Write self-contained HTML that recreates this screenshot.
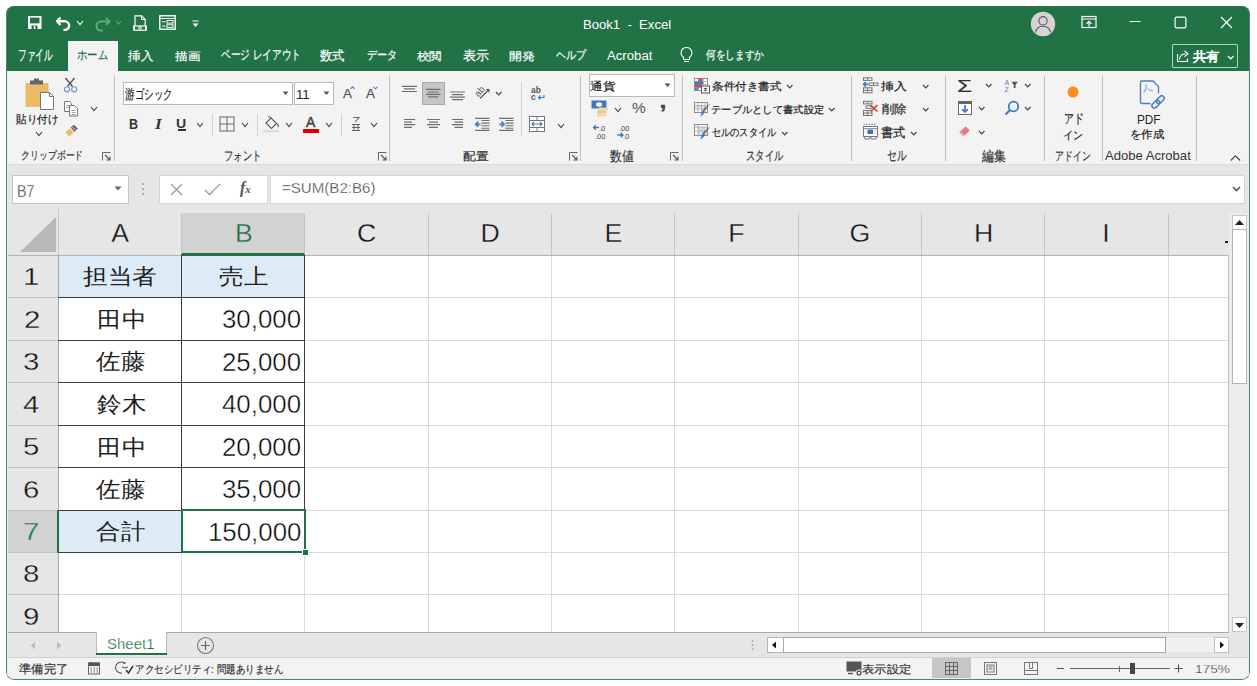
<!DOCTYPE html>
<html><head><meta charset="utf-8"><title>Book1 - Excel</title>
<style>
html,body{margin:0;padding:0;background:#fff;width:1257px;height:686px;overflow:hidden}
body{font-family:"Liberation Sans",sans-serif;position:relative}
#app{position:absolute;left:0;top:0;width:1257px;height:686px;clip-path:inset(6px 7px 6px 6px round 8px);overflow:hidden}
.t{position:absolute;line-height:1.2;white-space:nowrap}
.u{-webkit-text-stroke:0.2px currentColor}
svg{overflow:visible}
</style></head><body><div id="app">
<div style="position:absolute;left:0px;top:0px;width:1257px;height:71px;background:#217346"></div>
<svg style="position:absolute;left:27px;top:15px;" width="16" height="16" viewBox="0 0 16 16"><rect x="1" y="1" width="13.5" height="13" fill="#fff"/><rect x="3" y="2.6" width="9.5" height="5.8" fill="#217346"/><rect x="4.5" y="10.5" width="6" height="3.5" fill="#217346"/><rect x="6.8" y="11" width="1.6" height="3" fill="#fff"/></svg>
<svg style="position:absolute;left:55px;top:15px;" width="18" height="16" viewBox="0 0 18 16"><path d="M5.5 2.5 L2 6.3 L5.5 10" fill="none" stroke="#fff" stroke-width="2.4" stroke-linejoin="round"/><path d="M2.8 6.3 H9.8 a4.3 4.3 0 0 1 0 8.6 H8.5" fill="none" stroke="#fff" stroke-width="2.4"/></svg>
<svg style="position:absolute;left:76px;top:20px;" width="8" height="5.5" viewBox="0 0 8 5.5"><path d="M1 1 L4.0 4.5 L7 1" fill="none" stroke="#fff" stroke-width="1.15"/></svg>
<svg style="position:absolute;left:93px;top:15px;" width="18" height="16" viewBox="0 0 18 16"><path d="M13 3 L16.2 6.5 L13 10" fill="none" stroke="#5ea97d" stroke-width="2.2"/><path d="M15.5 6.5 H8 a4.5 4.5 0 0 0 0 9 H10" fill="none" stroke="#5ea97d" stroke-width="2.2"/></svg>
<svg style="position:absolute;left:115px;top:20px;" width="7" height="5" viewBox="0 0 7 5"><path d="M1 1 L3.5 4 L6 1" fill="none" stroke="#5ea97d" stroke-width="1.15"/></svg>
<svg style="position:absolute;left:133px;top:15px;" width="14" height="16" viewBox="0 0 14 16"><path d="M2 11 V0.8 H8.5 L12.2 4.5 V11" fill="none" stroke="#fff" stroke-width="1.2"/><path d="M8.5 0.8 V4.5 H12.2" fill="none" stroke="#fff" stroke-width="1"/><rect x="0.8" y="11" width="12.4" height="4.2" fill="none" stroke="#fff" stroke-width="1.2"/><circle cx="7" cy="13.1" r="1.3" fill="none" stroke="#fff" stroke-width="1"/><rect x="0.5" y="11.5" width="1.5" height="3" fill="#fff"/><rect x="12" y="11.5" width="1.5" height="3" fill="#fff"/></svg>
<svg style="position:absolute;left:159px;top:15px;" width="17" height="15" viewBox="0 0 17 15"><rect x="0.8" y="0.8" width="15.4" height="13.4" fill="none" stroke="#fff" stroke-width="1.4"/><line x1="1" y1="3.5" x2="16" y2="3.5" stroke="#fff" stroke-width="1.2"/><rect x="8" y="5.5" width="6" height="2.6" fill="none" stroke="#fff" stroke-width="1"/><rect x="8" y="9.8" width="6" height="2.6" fill="none" stroke="#fff" stroke-width="1"/><line x1="3" y1="6.8" x2="6.5" y2="6.8" stroke="#fff"/><line x1="3" y1="11" x2="6.5" y2="11" stroke="#fff"/></svg>
<svg style="position:absolute;left:192px;top:20px;" width="8" height="8" viewBox="0 0 8 8"><line x1="0.5" y1="1" x2="6.5" y2="1" stroke="#fff" stroke-width="1.2"/><path d="M0.5 3.5 H6.5 L3.5 7 Z" fill="#fff"/></svg>
<div class="t" style="left:583.32px;top:17.15px;font-size:13.438px;color:#fff;;transform:scaleX(0.9764);transform-origin:0 0">Book1&nbsp;&nbsp;-&nbsp;&nbsp;Excel</div>
<svg style="position:absolute;left:1030px;top:11px;" width="26" height="26" viewBox="0 0 26 26"><circle cx="13" cy="13" r="12.2" fill="#d5d3d4"/><circle cx="13" cy="9.8" r="4.2" fill="none" stroke="#5c5c5c" stroke-width="1.1"/><path d="M5.5 21.5 Q6.5 15.2 13 15.2 Q19.5 15.2 20.5 21.5" fill="none" stroke="#5c5c5c" stroke-width="1.1"/></svg>
<svg style="position:absolute;left:1081px;top:15px;" width="16" height="14" viewBox="0 0 16 14"><rect x="1" y="1.5" width="14" height="11" fill="none" stroke="#fff" stroke-width="1.2"/><line x1="1" y1="4" x2="15" y2="4" stroke="#fff" stroke-width="1.1"/><path d="M8 11.5 V6.5 M5.5 8.8 L8 6.3 L10.5 8.8" fill="none" stroke="#fff" stroke-width="1.2"/></svg>
<svg style="position:absolute;left:1129px;top:20px;" width="12" height="3" viewBox="0 0 12 3"><line x1="0.5" y1="1.5" x2="11.5" y2="1.5" stroke="#fff" stroke-width="1.2"/></svg>
<svg style="position:absolute;left:1174px;top:16px;" width="13" height="13" viewBox="0 0 13 13"><rect x="1.1" y="1.1" width="10.8" height="10.8" rx="1.6" fill="none" stroke="#fff" stroke-width="1.2"/></svg>
<svg style="position:absolute;left:1220px;top:16px;" width="13" height="13" viewBox="0 0 13 13"><path d="M1 1 L12 12 M12 1 L1 12" stroke="#fff" stroke-width="1.2"/></svg>
<div style="position:absolute;left:68px;top:41px;width:50px;height:30px;background:#f3f3f3"></div>
<div class="t u" style="left:18.34px;top:47.45px;font-size:14.816px;color:#fff;white-space:pre;transform:scaleX(0.5776);transform-origin:0 0">ファイル</div>
<div class="t u" style="left:76.74px;top:48.45px;font-size:12.384px;color:#217346;white-space:pre;transform:scaleX(0.8647);transform-origin:0 0">ホーム</div>
<div class="t u" style="left:128.25px;top:48.55px;font-size:11.702px;color:#fff;white-space:pre;transform:scaleX(1.0500);transform-origin:0 0">挿入</div>
<div class="t u" style="left:175.15px;top:49.55px;font-size:11.442px;color:#fff;white-space:pre;transform:scaleX(1.1500);transform-origin:0 0">描画</div>
<div class="t u" style="left:221.16px;top:47.45px;font-size:13.358px;color:#fff;white-space:pre;transform:scaleX(0.7423);transform-origin:0 0">ページ レイアウト</div>
<div class="t u" style="left:320.45px;top:49.25px;font-size:12.569px;color:#fff;white-space:pre;transform:scaleX(0.9520);transform-origin:0 0">数式</div>
<div class="t u" style="left:366.65px;top:48.45px;font-size:12.245px;color:#fff;white-space:pre;transform:scaleX(0.8455);transform-origin:0 0">データ</div>
<div class="t u" style="left:417.20px;top:49.75px;font-size:11.442px;color:#fff;white-space:pre;transform:scaleX(1.1333);transform-origin:0 0">校閲</div>
<div class="t u" style="left:462.79px;top:49.25px;font-size:12.569px;color:#fff;white-space:pre;transform:scaleX(1.0083);transform-origin:0 0">表示</div>
<div class="t u" style="left:509.43px;top:49.75px;font-size:11.442px;color:#fff;white-space:pre;transform:scaleX(1.1750);transform-origin:0 0">開発</div>
<div class="t u" style="left:555.56px;top:48.25px;font-size:12.205px;color:#fff;white-space:pre;transform:scaleX(0.8424);transform-origin:0 0">ヘルプ</div>
<div class="t" style="left:607.20px;top:49.45px;font-size:12.509px;color:#fff;white-space:pre;transform:scaleX(1.0535);transform-origin:0 0">Acrobat</div>
<div class="t u" style="left:705.80px;top:48.25px;font-size:12.482px;color:#fff;white-space:pre;transform:scaleX(0.8069);transform-origin:0 0">何をしますか</div>
<svg style="position:absolute;left:679px;top:46px;" width="15" height="18" viewBox="0 0 15 18"><path d="M7.5 1.5 a5.3 5.3 0 0 0 -3 9.7 V13.5 H10.5 V11.2 a5.3 5.3 0 0 0 -3 -9.7 Z" fill="none" stroke="#fff" stroke-width="1.1"/><line x1="5" y1="15.5" x2="10" y2="15.5" stroke="#fff" stroke-width="1.1"/></svg>
<div style="position:absolute;left:1172px;top:44px;width:66px;height:24px;border:1.5px solid #a9d9bb;box-sizing:border-box;border-radius:1px"></div>
<svg style="position:absolute;left:1176px;top:49px;" width="14" height="14" viewBox="0 0 14 14"><path d="M1.5 5 V12.5 H11.5 V9.5" fill="none" stroke="#fff" stroke-width="1.1"/><path d="M3.5 10.5 C3.8 7 6 5 9.5 4.8" fill="none" stroke="#fff" stroke-width="1.1"/><path d="M8.5 2 L12 4.8 L8.5 7.6" fill="none" stroke="#fff" stroke-width="1.1" stroke-linejoin="round"/></svg>
<div class="t u" style="left:1193.40px;top:49.15px;font-size:13.302px;color:#fff;-webkit-text-stroke:0.7px currentColor;transform:scaleX(1.0154);transform-origin:0 0">共有</div>
<svg style="position:absolute;left:1226.5px;top:54.5px;" width="7.5" height="5" viewBox="0 0 7.5 5"><path d="M1 1 L3.75 4 L6.5 1" fill="none" stroke="#fff" stroke-width="1.15"/></svg>
<div style="position:absolute;left:0px;top:71px;width:1257px;height:93px;background:#f3f3f3"></div>
<div style="position:absolute;left:0px;top:164px;width:1257px;height:1px;background:#dcdcdc"></div>
<div style="position:absolute;left:114px;top:76px;width:1px;height:85px;background:#bfbfbf"></div>
<div style="position:absolute;left:389px;top:76px;width:1px;height:85px;background:#bfbfbf"></div>
<div style="position:absolute;left:580px;top:76px;width:1px;height:85px;background:#bfbfbf"></div>
<div style="position:absolute;left:682px;top:76px;width:1px;height:85px;background:#bfbfbf"></div>
<div style="position:absolute;left:851px;top:76px;width:1px;height:85px;background:#bfbfbf"></div>
<div style="position:absolute;left:945px;top:76px;width:1px;height:85px;background:#bfbfbf"></div>
<div style="position:absolute;left:1044px;top:76px;width:1px;height:85px;background:#bfbfbf"></div>
<div style="position:absolute;left:1102px;top:76px;width:1px;height:85px;background:#bfbfbf"></div>
<div style="position:absolute;left:1196px;top:76px;width:1px;height:85px;background:#bfbfbf"></div>
<div class="t u" style="left:20.58px;top:149.25px;font-size:10.794px;color:#333;;transform:scaleX(0.8096);transform-origin:0 0">クリップボード</div>
<svg style="position:absolute;left:102px;top:152px;" width="9" height="9" viewBox="0 0 9 9"><path d="M0.5 8.5 V0.5 H8.5" fill="none" stroke="#666" stroke-width="1"/><path d="M3 3 L8 8 M4.5 8 H8 V4.5" fill="none" stroke="#555" stroke-width="1.1"/></svg>
<div class="t u" style="left:224.36px;top:147.85px;font-size:13.454px;color:#333;;transform:scaleX(0.7213);transform-origin:0 0">フォント</div>
<svg style="position:absolute;left:378px;top:152px;" width="9" height="9" viewBox="0 0 9 9"><path d="M0.5 8.5 V0.5 H8.5" fill="none" stroke="#666" stroke-width="1"/><path d="M3 3 L8 8 M4.5 8 H8 V4.5" fill="none" stroke="#555" stroke-width="1.1"/></svg>
<div class="t u" style="left:463.24px;top:150.35px;font-size:11.007px;color:#333;;transform:scaleX(1.1600);transform-origin:0 0">配置</div>
<svg style="position:absolute;left:569px;top:152px;" width="9" height="9" viewBox="0 0 9 9"><path d="M0.5 8.5 V0.5 H8.5" fill="none" stroke="#666" stroke-width="1"/><path d="M3 3 L8 8 M4.5 8 H8 V4.5" fill="none" stroke="#555" stroke-width="1.1"/></svg>
<div class="t u" style="left:610.16px;top:148.65px;font-size:13.676px;color:#333;;transform:scaleX(0.8444);transform-origin:0 0">数値</div>
<svg style="position:absolute;left:670px;top:152px;" width="9" height="9" viewBox="0 0 9 9"><path d="M0.5 8.5 V0.5 H8.5" fill="none" stroke="#666" stroke-width="1"/><path d="M3 3 L8 8 M4.5 8 H8 V4.5" fill="none" stroke="#555" stroke-width="1.1"/></svg>
<div class="t u" style="left:746.07px;top:148.35px;font-size:13.499px;color:#333;;transform:scaleX(0.7143);transform-origin:0 0">スタイル</div>
<div class="t u" style="left:886.80px;top:148.35px;font-size:13.612px;color:#333;;transform:scaleX(0.6963);transform-origin:0 0">セル</div>
<div class="t u" style="left:982.20px;top:148.65px;font-size:13.563px;color:#333;;transform:scaleX(0.8519);transform-origin:0 0">編集</div>
<div class="t u" style="left:1054.86px;top:149.30px;font-size:12.271px;color:#333;;transform:scaleX(0.7435);transform-origin:0 0">アドイン</div>
<div class="t" style="left:1105.40px;top:149.20px;font-size:12.348px;color:#333;;transform:scaleX(1.0605);transform-origin:0 0">Adobe Acrobat</div>
<svg style="position:absolute;left:1230px;top:155px;" width="11" height="6" viewBox="0 0 11 6"><path d="M0.8 5.5 L5.5 0.8 L10.2 5.5" fill="none" stroke="#444" stroke-width="1.1"/></svg>
<svg style="position:absolute;left:24px;top:78px;" width="32" height="34" viewBox="0 0 32 34"><rect x="1.5" y="5" width="23" height="24" fill="#e9bb66"/><rect x="6" y="2.5" width="13" height="4" fill="#666"/><rect x="10" y="0.5" width="5" height="3" fill="#666"/><path d="M16.5 14.5 H25.5 L29.5 18.5 V31.5 H16.5 Z" fill="#fff" stroke="#777" stroke-width="1"/><path d="M25.5 14.5 V18.5 H29.5" fill="none" stroke="#777" stroke-width="1"/></svg>
<div class="t u" style="left:16.44px;top:112.95px;font-size:10.524px;color:#222;;transform:scaleX(0.9595);transform-origin:0 0">貼り付け</div>
<svg style="position:absolute;left:35px;top:131px;" width="8" height="5.5" viewBox="0 0 8 5.5"><path d="M1 1 L4.0 4.5 L7 1" fill="none" stroke="#444" stroke-width="1.15"/></svg>
<svg style="position:absolute;left:62px;top:76px;" width="16" height="17" viewBox="0 0 16 17"><path d="M3.5 2 L10.5 10.5 M12.5 2 L5.5 10.5" stroke="#555" stroke-width="1.4"/><circle cx="5" cy="13.3" r="2.6" fill="#f3f3f3" stroke="#6f95c9" stroke-width="1.1"/><circle cx="12.2" cy="13.3" r="2.6" fill="#f3f3f3" stroke="#6f95c9" stroke-width="1.1"/></svg>
<svg style="position:absolute;left:63px;top:100px;" width="16" height="17" viewBox="0 0 16 17"><path d="M1.5 1.5 H6.5 L8.5 3.5 V11.5 H1.5 Z" fill="#fff" stroke="#777" stroke-width="1"/><line x1="3" y1="5.5" x2="6" y2="5.5" stroke="#8aa6c8"/><line x1="3" y1="7.5" x2="6" y2="7.5" stroke="#8aa6c8"/><path d="M6.5 5.5 H11.5 L14.5 8.5 V16 H6.5 Z" fill="#fff" stroke="#777" stroke-width="1"/><line x1="8.5" y1="10.5" x2="12.5" y2="10.5" stroke="#8aa6c8"/><line x1="8.5" y1="12.5" x2="12.5" y2="12.5" stroke="#8aa6c8"/><line x1="8.5" y1="14.5" x2="12.5" y2="14.5" stroke="#8aa6c8"/></svg>
<svg style="position:absolute;left:90px;top:106px;" width="8" height="5.5" viewBox="0 0 8 5.5"><path d="M1 1 L4.0 4.5 L7 1" fill="none" stroke="#444" stroke-width="1.15"/></svg>
<svg style="position:absolute;left:64px;top:124px;" width="16" height="14" viewBox="0 0 16 14"><path d="M1.5 8.5 L5.5 4.5 L9.5 8.5 L5.5 12.5 Z" fill="#e9bb66"/><path d="M6.5 3.5 L10 0.8 L13.8 4.6 L10.5 8 Z" fill="#6a6a6a"/><path d="M8 2.6 L11.8 6.4" stroke="#f3f3f3" stroke-width="0.7"/></svg>
<div style="position:absolute;left:123px;top:82px;width:170px;height:23px;background:#fff;border:1px solid #b9b9b9;box-sizing:border-box"></div>
<div class="t u" style="left:125.40px;top:86.65px;font-size:13.676px;color:#222;;transform:scaleX(0.6794);transform-origin:0 0">游ゴシック</div>
<svg style="position:absolute;left:282px;top:91px;" width="7" height="5" viewBox="0 0 7 5"><path d="M0.5 0.5 H6.5 L3.5 4 Z" fill="#555"/></svg>
<div style="position:absolute;left:294px;top:82px;width:40px;height:23px;background:#fff;border:1px solid #b9b9b9;box-sizing:border-box"></div>
<div class="t" style="left:296.39px;top:88.15px;font-size:11.912px;color:#222;;transform:scaleX(1.1091);transform-origin:0 0">11</div>
<svg style="position:absolute;left:323px;top:91px;" width="7" height="5" viewBox="0 0 7 5"><path d="M0.5 0.5 H6.5 L3.5 4 Z" fill="#555"/></svg>
<div class="t" style="left:343.00px;top:85.50px;font-size:13.330px;color:#555;-webkit-text-stroke:0.25px currentColor;transform:scaleX(1.0000);transform-origin:0 0">A</div>
<svg style="position:absolute;left:349.5px;top:85.5px;" width="5" height="4" viewBox="0 0 5 4"><path d="M0.5 2.8 L2.5 0.8 L4.5 2.8" fill="none" stroke="#4f7ec0" stroke-width="1.1"/></svg>
<div class="t" style="left:366.00px;top:85.50px;font-size:13.330px;color:#555;-webkit-text-stroke:0.25px currentColor;transform:scaleX(1.0000);transform-origin:0 0">A</div>
<svg style="position:absolute;left:372.5px;top:86px;" width="5" height="4" viewBox="0 0 5 4"><path d="M0.5 0.8 L2.5 2.8 L4.5 0.8" fill="none" stroke="#4f7ec0" stroke-width="1.1"/></svg>
<div class="t" style="left:128.73px;top:116.30px;font-size:14.444px;color:#333;font-weight:bold;transform:scaleX(0.8667);transform-origin:0 0">B</div>
<div class="t" style="left:155.00px;top:116.30px;font-size:14.773px;color:#333;font-weight:bold;font-style:italic;font-family:Liberation Serif;transform:scaleX(1.1667);transform-origin:0 0">I</div>
<div class="t" style="left:176.31px;top:117.00px;font-size:11.891px;color:#333;font-weight:bold;transform:scaleX(1.1857);transform-origin:0 0">U</div>
<div style="position:absolute;left:177.5px;top:129.3px;width:8.3px;height:1.3px;background:#333"></div>
<svg style="position:absolute;left:196px;top:122px;" width="8" height="5.5" viewBox="0 0 8 5.5"><path d="M1 1 L4.0 4.5 L7 1" fill="none" stroke="#444" stroke-width="1.15"/></svg>
<div style="position:absolute;left:212px;top:114px;width:1px;height:22px;background:#d0d0d0"></div>
<svg style="position:absolute;left:219px;top:116px;" width="16" height="16" viewBox="0 0 16 16"><rect x="1" y="1" width="14" height="14" fill="none" stroke="#666" stroke-width="1"/><line x1="8" y1="1" x2="8" y2="15" stroke="#666"/><line x1="1" y1="8" x2="15" y2="8" stroke="#666"/></svg>
<svg style="position:absolute;left:241px;top:122px;" width="8" height="5.5" viewBox="0 0 8 5.5"><path d="M1 1 L4.0 4.5 L7 1" fill="none" stroke="#444" stroke-width="1.15"/></svg>
<div style="position:absolute;left:257px;top:114px;width:1px;height:22px;background:#d0d0d0"></div>
<svg style="position:absolute;left:262px;top:115px;" width="19" height="18" viewBox="0 0 19 18"><path d="M4 8 L9 3 L14.5 8.5 L9.5 13.5 Z" fill="#fff" stroke="#555" stroke-width="1.1"/><path d="M9 3 Q7 0.5 6 2" fill="none" stroke="#555"/><path d="M14.5 8.5 Q17 10 16 12" fill="none" stroke="#4f7ec0" stroke-width="1.4"/><rect x="1" y="15" width="16" height="2.5" fill="#cfe2f3"/></svg>
<svg style="position:absolute;left:285px;top:122px;" width="8" height="5.5" viewBox="0 0 8 5.5"><path d="M1 1 L4.0 4.5 L7 1" fill="none" stroke="#444" stroke-width="1.15"/></svg>
<div class="t" style="left:306.00px;top:114.40px;font-size:14.857px;color:#444;-webkit-text-stroke:0.5px #444;transform:scaleX(0.9400);transform-origin:0 0">A</div>
<div style="position:absolute;left:303px;top:129px;width:16px;height:3.5px;background:#e00000"></div>
<svg style="position:absolute;left:325px;top:122px;" width="8" height="5.5" viewBox="0 0 8 5.5"><path d="M1 1 L4.0 4.5 L7 1" fill="none" stroke="#444" stroke-width="1.15"/></svg>
<div style="position:absolute;left:341px;top:114px;width:1px;height:22px;background:#d0d0d0"></div>
<svg style="position:absolute;left:351px;top:116px;" width="10" height="16" viewBox="0 0 10 16"><path d="M2 1.5 H8 L4 6" fill="none" stroke="#666" stroke-width="1.1"/><path d="M1 8.5 H9 M3 8.5 V14.5 M7 8.5 V14.5 M1 11.5 H9 M1 14.5 H9" fill="none" stroke="#666" stroke-width="1"/></svg>
<svg style="position:absolute;left:370px;top:122px;" width="8" height="5.5" viewBox="0 0 8 5.5"><path d="M1 1 L4.0 4.5 L7 1" fill="none" stroke="#444" stroke-width="1.15"/></svg>
<svg style="position:absolute;left:401px;top:84px;" width="20" height="16" viewBox="0 0 20 16"><line x1="1" y1="2.3" x2="16" y2="2.3" stroke="#6e6e6e" stroke-width="1.2"/><line x1="3" y1="4.9" x2="14" y2="4.9" stroke="#6e6e6e" stroke-width="1.2"/><line x1="1" y1="7.5" x2="16" y2="7.5" stroke="#6e6e6e" stroke-width="1.2"/></svg>
<div style="position:absolute;left:422px;top:82px;width:23px;height:23px;background:#c6c6c6;border:1px solid #a8a8a8;box-sizing:border-box"></div>
<svg style="position:absolute;left:425px;top:87px;" width="20" height="16" viewBox="0 0 20 16"><line x1="1" y1="2.4" x2="15.5" y2="2.4" stroke="#6e6e6e" stroke-width="1.2"/><line x1="3" y1="5" x2="13.5" y2="5" stroke="#6e6e6e" stroke-width="1.2"/><line x1="1" y1="7.4" x2="15.5" y2="7.4" stroke="#6e6e6e" stroke-width="1.2"/><line x1="3" y1="9.9" x2="13.5" y2="9.9" stroke="#6e6e6e" stroke-width="1.2"/></svg>
<svg style="position:absolute;left:449px;top:91px;" width="20" height="16" viewBox="0 0 20 16"><line x1="1" y1="1" x2="16" y2="1" stroke="#6e6e6e" stroke-width="1.2"/><line x1="3" y1="3.6" x2="14" y2="3.6" stroke="#6e6e6e" stroke-width="1.2"/><line x1="1" y1="6.2" x2="16" y2="6.2" stroke="#6e6e6e" stroke-width="1.2"/><line x1="3" y1="8.7" x2="14" y2="8.7" stroke="#6e6e6e" stroke-width="1.2"/></svg>
<svg style="position:absolute;left:474px;top:85px;" width="19" height="16" viewBox="0 0 19 16"><text x="0" y="0" font-size="9.5" font-family="Liberation Sans" fill="#555" transform="translate(4.5 12.5) rotate(-50)">ab</text><path d="M6 13.5 L14.5 5 M12 4.5 H15 V7.5" fill="none" stroke="#555" stroke-width="1.1"/></svg>
<svg style="position:absolute;left:494.5px;top:91px;" width="7.5" height="5" viewBox="0 0 7.5 5"><path d="M1 1 L3.75 4 L6.5 1" fill="none" stroke="#444" stroke-width="1.15"/></svg>
<svg style="position:absolute;left:403px;top:118px;" width="20" height="16" viewBox="0 0 20 16"><line x1="1" y1="1.5" x2="12" y2="1.5" stroke="#6e6e6e" stroke-width="1.2"/><line x1="1" y1="4.1" x2="9" y2="4.1" stroke="#6e6e6e" stroke-width="1.2"/><line x1="1" y1="6.7" x2="12" y2="6.7" stroke="#6e6e6e" stroke-width="1.2"/><line x1="1" y1="9.3" x2="9" y2="9.3" stroke="#6e6e6e" stroke-width="1.2"/></svg>
<svg style="position:absolute;left:426px;top:118px;" width="20" height="16" viewBox="0 0 20 16"><line x1="1" y1="1.5" x2="14" y2="1.5" stroke="#6e6e6e" stroke-width="1.2"/><line x1="3" y1="4.1" x2="12" y2="4.1" stroke="#6e6e6e" stroke-width="1.2"/><line x1="1" y1="6.7" x2="14" y2="6.7" stroke="#6e6e6e" stroke-width="1.2"/><line x1="3" y1="9.3" x2="12" y2="9.3" stroke="#6e6e6e" stroke-width="1.2"/></svg>
<svg style="position:absolute;left:451px;top:118px;" width="20" height="16" viewBox="0 0 20 16"><line x1="1" y1="1.5" x2="12" y2="1.5" stroke="#6e6e6e" stroke-width="1.2"/><line x1="3.5" y1="4.1" x2="12" y2="4.1" stroke="#6e6e6e" stroke-width="1.2"/><line x1="1" y1="6.7" x2="12" y2="6.7" stroke="#6e6e6e" stroke-width="1.2"/><line x1="3.5" y1="9.3" x2="12" y2="9.3" stroke="#6e6e6e" stroke-width="1.2"/></svg>
<svg style="position:absolute;left:474px;top:117px;" width="17" height="15" viewBox="0 0 17 15"><line x1="1" y1="1.3" x2="15.5" y2="1.3" stroke="#6e6e6e" stroke-width="1.2"/><line x1="1" y1="13.3" x2="15.5" y2="13.3" stroke="#6e6e6e" stroke-width="1.2"/><line x1="7.5" y1="3.5" x2="15.5" y2="3.5" stroke="#6e6e6e" stroke-width="1.1"/><line x1="7.5" y1="6.1" x2="15.5" y2="6.1" stroke="#6e6e6e" stroke-width="1.1"/><line x1="7.5" y1="8.7" x2="15.5" y2="8.7" stroke="#6e6e6e" stroke-width="1.1"/><line x1="7.5" y1="11.2" x2="15.5" y2="11.2" stroke="#6e6e6e" stroke-width="1.1"/><path d="M6.5 7.3 H1.8 M4.3 4.6 L1.6 7.3 L4.3 10" fill="none" stroke="#4f7ec0" stroke-width="1.7"/></svg>
<svg style="position:absolute;left:498px;top:117px;" width="17" height="15" viewBox="0 0 17 15"><line x1="1" y1="1.3" x2="15.5" y2="1.3" stroke="#6e6e6e" stroke-width="1.2"/><line x1="1" y1="13.3" x2="15.5" y2="13.3" stroke="#6e6e6e" stroke-width="1.2"/><line x1="7.5" y1="3.5" x2="15.5" y2="3.5" stroke="#6e6e6e" stroke-width="1.1"/><line x1="7.5" y1="6.1" x2="15.5" y2="6.1" stroke="#6e6e6e" stroke-width="1.1"/><line x1="7.5" y1="8.7" x2="15.5" y2="8.7" stroke="#6e6e6e" stroke-width="1.1"/><line x1="7.5" y1="11.2" x2="15.5" y2="11.2" stroke="#6e6e6e" stroke-width="1.1"/><path d="M1.2 7.3 H5.8 M3.4 4.6 L6.1 7.3 L3.4 10" fill="none" stroke="#4f7ec0" stroke-width="1.7"/></svg>
<div style="position:absolute;left:521px;top:82px;width:1px;height:54px;background:#d0d0d0"></div>
<svg style="position:absolute;left:530px;top:86px;" width="16" height="15" viewBox="0 0 16 15"><text x="1" y="7" font-size="8.5" font-family="Liberation Sans" font-weight="bold" fill="#555">ab</text><text x="1" y="14" font-size="8.5" font-family="Liberation Sans" font-weight="bold" fill="#555">c</text><path d="M14 9 V11.5 H8.5 M10.5 9.5 L8.5 11.5 L10.5 13.5" fill="none" stroke="#3f78c0" stroke-width="1.1"/></svg>
<svg style="position:absolute;left:529px;top:116px;" width="17" height="17" viewBox="0 0 17 17"><rect x="0.5" y="0.5" width="15" height="15" fill="#fff" stroke="#777"/><line x1="0.5" y1="4.5" x2="15.5" y2="4.5" stroke="#777"/><line x1="0.5" y1="11.5" x2="15.5" y2="11.5" stroke="#777"/><line x1="8" y1="0.5" x2="8" y2="4.5" stroke="#777"/><line x1="8" y1="11.5" x2="8" y2="15.5" stroke="#777"/><path d="M3 8 H13 M5 6 L3 8 L5 10 M11 6 L13 8 L11 10" fill="none" stroke="#3f78c0" stroke-width="1.1"/></svg>
<svg style="position:absolute;left:557px;top:123px;" width="8" height="5.5" viewBox="0 0 8 5.5"><path d="M1 1 L4.0 4.5 L7 1" fill="none" stroke="#444" stroke-width="1.15"/></svg>
<div style="position:absolute;left:589px;top:74px;width:86px;height:23px;background:#fff;border:1px solid #b9b9b9;box-sizing:border-box"></div>
<div class="t u" style="left:589.86px;top:79.95px;font-size:10.703px;color:#222;;transform:scaleX(1.1429);transform-origin:0 0">通貨</div>
<svg style="position:absolute;left:664px;top:83px;" width="7" height="5" viewBox="0 0 7 5"><path d="M0.5 0.5 H6.5 L3.5 4 Z" fill="#555"/></svg>
<svg style="position:absolute;left:591px;top:100px;" width="18" height="18" viewBox="0 0 18 18"><rect x="0.5" y="0.5" width="15" height="8" fill="#3f78c0"/><ellipse cx="8" cy="4.5" rx="3" ry="2.2" fill="#fff"/><rect x="8" y="7.5" width="9" height="3" fill="#f3d9a8"/><rect x="6" y="10.5" width="9" height="3" fill="#eac78a"/><rect x="6" y="13.5" width="9" height="3" fill="#f3d9a8"/></svg>
<svg style="position:absolute;left:614px;top:107px;" width="8" height="5.5" viewBox="0 0 8 5.5"><path d="M1 1 L4.0 4.5 L7 1" fill="none" stroke="#444" stroke-width="1.15"/></svg>
<div class="t" style="left:631.98px;top:99.25px;font-size:15.109px;color:#555;;transform:scaleX(1.0250);transform-origin:0 0">%</div>
<div class="t" style="left:659.02px;top:88.15px;font-size:22.230px;color:#444;font-weight:bold;transform:scaleX(1.2750);transform-origin:0 0">,</div>
<svg style="position:absolute;left:592px;top:124px;" width="16" height="16" viewBox="0 0 16 16"><path d="M7 3.5 H1.5 M3.8 1.2 L1.5 3.5 L3.8 5.8" fill="none" stroke="#3f78c0" stroke-width="1.3"/><text x="7" y="7" font-size="7.5" font-family="Liberation Sans" fill="#444">.0</text><text x="3" y="14.5" font-size="7.5" font-family="Liberation Sans" fill="#444">.00</text></svg>
<svg style="position:absolute;left:616px;top:124px;" width="16" height="16" viewBox="0 0 16 16"><text x="3" y="7" font-size="7.5" font-family="Liberation Sans" fill="#444">.00</text><path d="M1.5 11 H7 M4.7 8.7 L7 11 L4.7 13.3" fill="none" stroke="#3f78c0" stroke-width="1.3"/><text x="7" y="14.5" font-size="7.5" font-family="Liberation Sans" fill="#444">.0</text></svg>
<svg style="position:absolute;left:693px;top:77px;" width="18" height="17" viewBox="0 0 18 17"><rect x="1.5" y="1.5" width="13" height="12" fill="#fff" stroke="#8a8a8a" stroke-width="1"/><path d="M1.5 4.5 H14.5 M1.5 7.5 H14.5 M1.5 10.5 H14.5 M5.5 1.5 V13.5 M10.5 1.5 V13.5" stroke="#b5b5b5" stroke-width="1"/><rect x="5.5" y="1.5" width="4" height="3" fill="#c94f43"/><rect x="2" y="4.5" width="8" height="3" fill="#3f78c0"/><rect x="2" y="7.5" width="7" height="3" fill="#c94f43"/><rect x="2" y="10.5" width="3.5" height="3" fill="#4d8fce"/><rect x="8.5" y="9" width="8" height="7" fill="#fff" stroke="#555" stroke-width="1"/><path d="M10.8 11.5 H14.2 M10.8 13.3 H14.2 M13.2 10.5 L11.8 14.3" stroke="#555" stroke-width="0.9"/></svg>
<div class="t u" style="left:711.85px;top:80.05px;font-size:11.137px;color:#222;;transform:scaleX(1.0523);transform-origin:0 0">条件付き書式</div>
<svg style="position:absolute;left:786px;top:84px;" width="7.5" height="5" viewBox="0 0 7.5 5"><path d="M1 1 L3.75 4 L6.5 1" fill="none" stroke="#444" stroke-width="1.15"/></svg>
<svg style="position:absolute;left:693px;top:101px;" width="19" height="17" viewBox="0 0 19 17"><rect x="1.5" y="1.5" width="13" height="10" fill="#fff" stroke="#8a8a8a" stroke-width="1"/><rect x="2" y="4.5" width="12" height="3" fill="#dfe6ee"/><path d="M1.5 4.5 H14.5 M1.5 8 H14.5 M5 1.5 V11.5 M8.5 1.5 V11.5 M12 1.5 V11.5" stroke="#b0b0b0" stroke-width="1"/><path d="M17.5 2.5 L12 9 L10.5 8 Z" fill="#555"/><path d="M10.5 8 L12 9 Q11.5 13 7.5 15.5 Q8 11 10.5 8 Z" fill="#3f78c0"/></svg>
<div class="t u" style="left:710.84px;top:104.30px;font-size:10.411px;color:#222;;transform:scaleX(1.0290);transform-origin:0 0">テーブルとして書式設定</div>
<svg style="position:absolute;left:827.5px;top:107px;" width="7.5" height="5" viewBox="0 0 7.5 5"><path d="M1 1 L3.75 4 L6.5 1" fill="none" stroke="#444" stroke-width="1.15"/></svg>
<svg style="position:absolute;left:693px;top:123px;" width="19" height="17" viewBox="0 0 19 17"><rect x="1.5" y="1.5" width="13" height="11" fill="#fff" stroke="#8a8a8a" stroke-width="1"/><rect x="5" y="4" width="9" height="8" fill="#cfdbe8"/><path d="M1.5 4 H14.5 M1.5 8 H14.5 M5 1.5 V12.5" stroke="#b0b0b0" stroke-width="1"/><path d="M17.5 3.5 L12 10 L10.5 9 Z" fill="#555"/><path d="M10.5 9 L12 10 Q11.5 14 7.5 16.5 Q8 12 10.5 9 Z" fill="#3f78c0"/></svg>
<div class="t u" style="left:712.47px;top:126.25px;font-size:11.353px;color:#222;;transform:scaleX(0.8316);transform-origin:0 0">セルのスタイル</div>
<svg style="position:absolute;left:781px;top:130.5px;" width="7.5" height="5" viewBox="0 0 7.5 5"><path d="M1 1 L3.75 4 L6.5 1" fill="none" stroke="#444" stroke-width="1.15"/></svg>
<svg style="position:absolute;left:862px;top:77px;" width="18" height="17" viewBox="0 0 18 17"><rect x="1.5" y="0.8" width="8.5" height="2.6" fill="none" stroke="#777" stroke-width="1"/><line x1="5.7" y1="0.8" x2="5.7" y2="3.4" stroke="#777"/><rect x="7" y="6" width="9" height="2.6" fill="none" stroke="#777" stroke-width="1"/><line x1="11.5" y1="6" x2="11.5" y2="8.6" stroke="#777"/><path d="M6 7.3 H2 M4 5 L1.6 7.3 L4 9.6" fill="none" stroke="#3f78c0" stroke-width="1.6"/><rect x="1.5" y="10.8" width="8.5" height="5" fill="none" stroke="#777" stroke-width="1"/><line x1="1.5" y1="13.3" x2="10" y2="13.3" stroke="#777"/><line x1="5.7" y1="10.8" x2="5.7" y2="15.8" stroke="#777"/></svg>
<div class="t u" style="left:880.83px;top:80.25px;font-size:11.099px;color:#222;;transform:scaleX(1.1750);transform-origin:0 0">挿入</div>
<svg style="position:absolute;left:921.5px;top:83.5px;" width="7.5" height="5" viewBox="0 0 7.5 5"><path d="M1 1 L3.75 4 L6.5 1" fill="none" stroke="#444" stroke-width="1.15"/></svg>
<svg style="position:absolute;left:862px;top:100px;" width="18" height="17" viewBox="0 0 18 17"><rect x="1.5" y="1.3" width="8.5" height="2.6" fill="none" stroke="#777" stroke-width="1"/><line x1="5.7" y1="1.3" x2="5.7" y2="3.9" stroke="#777"/><rect x="4" y="5.8" width="5" height="2.6" fill="none" stroke="#777" stroke-width="1"/><path d="M8.5 5 L15.5 11.5 M15.5 5 L8.5 11.5" stroke="#d03a2c" stroke-width="1.7"/><rect x="1.5" y="10.5" width="8.5" height="5" fill="none" stroke="#777" stroke-width="1"/><line x1="1.5" y1="13" x2="10" y2="13" stroke="#777"/><line x1="5.7" y1="10.5" x2="5.7" y2="15.5" stroke="#777"/></svg>
<div class="t u" style="left:882.00px;top:102.20px;font-size:11.708px;color:#222;;transform:scaleX(1.0217);transform-origin:0 0">削除</div>
<svg style="position:absolute;left:921.5px;top:106.5px;" width="7.5" height="5" viewBox="0 0 7.5 5"><path d="M1 1 L3.75 4 L6.5 1" fill="none" stroke="#444" stroke-width="1.15"/></svg>
<svg style="position:absolute;left:862px;top:123px;" width="18" height="17" viewBox="0 0 18 17"><line x1="1.5" y1="1.3" x2="14.5" y2="1.3" stroke="#5b8fcf" stroke-width="1" stroke-dasharray="1.6 1"/><rect x="1.5" y="3.5" width="14" height="10" fill="#fff" stroke="#777" stroke-width="1"/><line x1="1.5" y1="5.5" x2="15.5" y2="5.5" stroke="#999"/><rect x="2" y="6" width="3" height="5" fill="#eef0f4"/><rect x="12" y="6" width="3" height="5" fill="#f3e9e3"/><rect x="5.5" y="6.5" width="5.5" height="4.5" fill="#3f6fb0"/><path d="M2 13.5 L3 16 H7.5 L8.5 13.5 M8.5 13.5 L9.5 16 H14 L15 13.5" fill="none" stroke="#777" stroke-width="1"/></svg>
<div class="t u" style="left:881.06px;top:126.20px;font-size:12.667px;color:#222;;transform:scaleX(0.9400);transform-origin:0 0">書式</div>
<svg style="position:absolute;left:910px;top:130.5px;" width="7.5" height="5" viewBox="0 0 7.5 5"><path d="M1 1 L3.75 4 L6.5 1" fill="none" stroke="#444" stroke-width="1.15"/></svg>
<div class="t u" style="left:957.44px;top:77.75px;font-size:15.599px;color:#333;;transform:scaleX(1.5625);transform-origin:0 0">Σ</div>
<svg style="position:absolute;left:984.5px;top:82.5px;" width="7.5" height="5" viewBox="0 0 7.5 5"><path d="M1 1 L3.75 4 L6.5 1" fill="none" stroke="#444" stroke-width="1.15"/></svg>
<svg style="position:absolute;left:1004px;top:78px;" width="22" height="14" viewBox="0 0 22 14"><text x="0.5" y="6.5" font-size="7" font-family="Liberation Sans" fill="#4f7ec0">A</text><text x="0.5" y="13.8" font-size="7" font-family="Liberation Sans" fill="#a0609a">Z</text><path d="M7.5 3.8 H13.8 L11.5 7 V10 L9.8 10 V7 Z" fill="#555"/></svg>
<svg style="position:absolute;left:1024px;top:82.5px;" width="7.5" height="5" viewBox="0 0 7.5 5"><path d="M1 1 L3.75 4 L6.5 1" fill="none" stroke="#444" stroke-width="1.15"/></svg>
<svg style="position:absolute;left:958px;top:101px;" width="15" height="15" viewBox="0 0 15 15"><rect x="0.5" y="0.5" width="13" height="13" fill="#fff" stroke="#666"/><line x1="0.5" y1="2" x2="13.5" y2="2" stroke="#666" stroke-width="2"/><path d="M7 4 V11 M4.2 8.2 L7 11 L9.8 8.2" fill="none" stroke="#3f78c0" stroke-width="1.7"/></svg>
<svg style="position:absolute;left:977.5px;top:106px;" width="7.5" height="5" viewBox="0 0 7.5 5"><path d="M1 1 L3.75 4 L6.5 1" fill="none" stroke="#444" stroke-width="1.15"/></svg>
<svg style="position:absolute;left:1004px;top:100px;" width="16" height="16" viewBox="0 0 16 16"><circle cx="9.5" cy="6.5" r="4.8" fill="none" stroke="#3f78c0" stroke-width="1.7"/><path d="M6 10 L1.5 14.5" stroke="#3f78c0" stroke-width="2.2"/></svg>
<svg style="position:absolute;left:1024px;top:106px;" width="7.5" height="5" viewBox="0 0 7.5 5"><path d="M1 1 L3.75 4 L6.5 1" fill="none" stroke="#444" stroke-width="1.15"/></svg>
<svg style="position:absolute;left:957px;top:124px;" width="15" height="15" viewBox="0 0 15 15"><rect x="3" y="4.5" width="9" height="6" rx="1" transform="rotate(-45 7.5 7.5)" fill="#e4788c"/><path d="M3.2 9.2 L6.5 12.5" stroke="#fff" stroke-width="0.9" transform="translate(0.6 -0.6)"/></svg>
<svg style="position:absolute;left:977.5px;top:129.5px;" width="7.5" height="5" viewBox="0 0 7.5 5"><path d="M1 1 L3.75 4 L6.5 1" fill="none" stroke="#444" stroke-width="1.15"/></svg>
<svg style="position:absolute;left:1066px;top:85px;" width="14" height="14" viewBox="0 0 14 14"><circle cx="7" cy="7" r="5.5" fill="#ff8c1a"/></svg>
<div class="t u" style="left:1064.34px;top:111.05px;font-size:13.364px;color:#222;;transform:scaleX(0.7609);transform-origin:0 0">アド</div>
<div class="t u" style="left:1063.15px;top:128.75px;font-size:11.432px;color:#222;;transform:scaleX(0.9263);transform-origin:0 0">イン</div>
<svg style="position:absolute;left:1138px;top:79px;" width="30" height="32" viewBox="0 0 30 32"><path d="M12.5 24.5 H4 Q2.5 24.5 2.5 23 V3.5 Q2.5 2 4 2 H15 L20.5 7.5 V14.5" fill="none" stroke="#4f7ec0" stroke-width="1.4"/><path d="M8 5.5 Q9 9 6 13.5 M9.5 9.5 Q11 12 15 11.5 M5.5 13.5 L8 11" fill="none" stroke="#6a8fc8" stroke-width="0.9"/><rect x="-2.4" y="-4.5" width="4.8" height="9" rx="2.4" transform="translate(17.8 25.2) rotate(45)" fill="#f3f3f3" stroke="#4f7ec0" stroke-width="1.5"/><rect x="-2.4" y="-4.5" width="4.8" height="9" rx="2.4" transform="translate(22.3 20.7) rotate(45)" fill="none" stroke="#4f7ec0" stroke-width="1.5"/></svg>
<div class="t" style="left:1136.57px;top:113.20px;font-size:12.620px;color:#222;;transform:scaleX(0.9292);transform-origin:0 0">PDF</div>
<div class="t u" style="left:1130.32px;top:127.95px;font-size:11.303px;color:#222;;transform:scaleX(1.0387);transform-origin:0 0">を作成</div>
<div style="position:absolute;left:0px;top:165px;width:1257px;height:467px;background:#e6e6e6"></div>
<div style="position:absolute;left:12px;top:175px;width:117px;height:29px;background:#fff;border:1px solid #c6c6c6;box-sizing:border-box"></div>
<div class="t" style="left:17.49px;top:182.85px;font-size:15.603px;color:#3a3a3a;-webkit-text-stroke:0.3px #fff;transform:scaleX(0.9118);transform-origin:0 0">B7</div>
<svg style="position:absolute;left:114px;top:186px;" width="8" height="5" viewBox="0 0 8 5"><path d="M0.5 0.5 H7.5 L4 4.5 Z" fill="#666"/></svg>
<svg style="position:absolute;left:141px;top:182px;" width="4" height="14" viewBox="0 0 4 14"><circle cx="2" cy="2" r="1" fill="#999"/><circle cx="2" cy="7" r="1" fill="#999"/><circle cx="2" cy="12" r="1" fill="#999"/></svg>
<div style="position:absolute;left:159px;top:175px;width:109px;height:29px;background:#fff;border:1px solid #d6d6d6;box-sizing:border-box"></div>
<svg style="position:absolute;left:170px;top:183px;" width="13" height="13" viewBox="0 0 13 13"><path d="M1 1 L12 12 M12 1 L1 12" stroke="#9a9a9a" stroke-width="1.3"/></svg>
<svg style="position:absolute;left:204px;top:183px;" width="17" height="13" viewBox="0 0 17 13"><path d="M1 7 L5.5 11.5 L16 1" fill="none" stroke="#9a9a9a" stroke-width="1.3"/></svg>
<div class="t" style="left:240px;top:178px;font-size:16px;color:#555;font-family:Liberation Serif;font-weight:bold"><i>f</i><span style="font-size:11px"><i>x</i></span></div>
<div style="position:absolute;left:270px;top:175px;width:975px;height:29px;background:#fff;border:1px solid #d6d6d6;box-sizing:border-box"></div>
<div class="t" style="left:281.93px;top:180.20px;font-size:14.165px;color:#3a3a3a;-webkit-text-stroke:0.3px #fff;transform:scaleX(1.0651);transform-origin:0 0">=SUM(B2:B6)</div>
<svg style="position:absolute;left:1232px;top:186px;" width="9" height="6" viewBox="0 0 9 6"><path d="M1 1 L4.5 4.5 L8 1" fill="none" stroke="#555" stroke-width="1.7"/></svg>
<div style="position:absolute;left:6px;top:213px;width:1223px;height:42px;background:#e6e6e6"></div>
<div style="position:absolute;left:181px;top:213px;width:124px;height:42px;background:#d2d2d2"></div>
<div style="position:absolute;left:181px;top:253px;width:124px;height:2px;background:#217346"></div>
<svg style="position:absolute;left:19px;top:216px;" width="39" height="38" viewBox="0 0 39 38"><path d="M37 1 V36 H1 Z" fill="#b8b8b8"/></svg>
<div style="position:absolute;left:181px;top:213px;width:1px;height:42px;background:#c4c4c4"></div>
<div style="position:absolute;left:304px;top:213px;width:1px;height:42px;background:#c4c4c4"></div>
<div style="position:absolute;left:428px;top:213px;width:1px;height:42px;background:#c4c4c4"></div>
<div style="position:absolute;left:551px;top:213px;width:1px;height:42px;background:#c4c4c4"></div>
<div style="position:absolute;left:674px;top:213px;width:1px;height:42px;background:#c4c4c4"></div>
<div style="position:absolute;left:798px;top:213px;width:1px;height:42px;background:#c4c4c4"></div>
<div style="position:absolute;left:921px;top:213px;width:1px;height:42px;background:#c4c4c4"></div>
<div style="position:absolute;left:1044px;top:213px;width:1px;height:42px;background:#c4c4c4"></div>
<div style="position:absolute;left:1168px;top:213px;width:1px;height:42px;background:#c4c4c4"></div>
<div style="position:absolute;left:58px;top:209px;width:1px;height:46px;background:#c6c6c6"></div>
<div style="position:absolute;left:58px;top:255px;width:1px;height:377px;background:#a8a8a8"></div>
<div style="position:absolute;left:6px;top:255px;width:1223px;height:1px;background:#b4b4b4"></div>
<div style="position:absolute;left:181px;top:254px;width:124px;height:2px;background:#217346"></div>
<div class="t" style="left:974.00px;top:217.25px;font-size:26.704px;color:#111;-webkit-text-stroke:0.35px #e6e6e6;transform:scaleX(1.0000);transform-origin:0 0">H</div>
<div class="t" style="left:111.25px;top:217.25px;font-size:26.704px;color:#111;-webkit-text-stroke:0.35px #e6e6e6;transform:scaleX(1.0000);transform-origin:0 0">A</div>
<div class="t" style="left:235.00px;top:217.25px;font-size:26.704px;color:#217346;-webkit-text-stroke:0.35px #d2d2d2;transform:scaleX(1.0000);transform-origin:0 0">B</div>
<div class="t" style="left:357.10px;top:217.25px;font-size:26.704px;color:#111;-webkit-text-stroke:0.35px #e6e6e6;transform:scaleX(1.0000);transform-origin:0 0">C</div>
<div class="t" style="left:480.45px;top:217.25px;font-size:26.704px;color:#111;-webkit-text-stroke:0.35px #e6e6e6;transform:scaleX(1.0000);transform-origin:0 0">D</div>
<div class="t" style="left:604.50px;top:217.25px;font-size:26.704px;color:#111;-webkit-text-stroke:0.35px #e6e6e6;transform:scaleX(1.0000);transform-origin:0 0">E</div>
<div class="t" style="left:728.35px;top:217.25px;font-size:26.704px;color:#111;-webkit-text-stroke:0.35px #e6e6e6;transform:scaleX(1.0000);transform-origin:0 0">F</div>
<div class="t" style="left:849.60px;top:217.25px;font-size:26.704px;color:#111;-webkit-text-stroke:0.35px #e6e6e6;transform:scaleX(1.0000);transform-origin:0 0">G</div>
<div class="t" style="left:1102.25px;top:217.25px;font-size:26.704px;color:#111;-webkit-text-stroke:0.35px #e6e6e6;transform:scaleX(1.0000);transform-origin:0 0">I</div>
<div style="position:absolute;left:1225px;top:241px;width:3px;height:1.5px;background:#222"></div>
<div style="position:absolute;left:59px;top:256px;width:1170px;height:376px;background:#fff"></div>
<div style="position:absolute;left:6px;top:256px;width:52px;height:376px;background:#e6e6e6"></div>
<div style="position:absolute;left:6px;top:510px;width:52px;height:42px;background:#d2d2d2"></div>
<div style="position:absolute;left:6px;top:297px;width:52px;height:1px;background:#c4c4c4"></div>
<div style="position:absolute;left:59px;top:297px;width:1170px;height:1px;background:#dadada"></div>
<div style="position:absolute;left:6px;top:340px;width:52px;height:1px;background:#c4c4c4"></div>
<div style="position:absolute;left:59px;top:340px;width:1170px;height:1px;background:#dadada"></div>
<div style="position:absolute;left:6px;top:382px;width:52px;height:1px;background:#c4c4c4"></div>
<div style="position:absolute;left:59px;top:382px;width:1170px;height:1px;background:#dadada"></div>
<div style="position:absolute;left:6px;top:425px;width:52px;height:1px;background:#c4c4c4"></div>
<div style="position:absolute;left:59px;top:425px;width:1170px;height:1px;background:#dadada"></div>
<div style="position:absolute;left:6px;top:467px;width:52px;height:1px;background:#c4c4c4"></div>
<div style="position:absolute;left:59px;top:467px;width:1170px;height:1px;background:#dadada"></div>
<div style="position:absolute;left:6px;top:510px;width:52px;height:1px;background:#c4c4c4"></div>
<div style="position:absolute;left:59px;top:510px;width:1170px;height:1px;background:#dadada"></div>
<div style="position:absolute;left:6px;top:552px;width:52px;height:1px;background:#c4c4c4"></div>
<div style="position:absolute;left:59px;top:552px;width:1170px;height:1px;background:#dadada"></div>
<div style="position:absolute;left:6px;top:594px;width:52px;height:1px;background:#c4c4c4"></div>
<div style="position:absolute;left:59px;top:594px;width:1170px;height:1px;background:#dadada"></div>
<div style="position:absolute;left:181px;top:256px;width:1px;height:376px;background:#dadada"></div>
<div style="position:absolute;left:304px;top:256px;width:1px;height:376px;background:#dadada"></div>
<div style="position:absolute;left:428px;top:256px;width:1px;height:376px;background:#dadada"></div>
<div style="position:absolute;left:551px;top:256px;width:1px;height:376px;background:#dadada"></div>
<div style="position:absolute;left:674px;top:256px;width:1px;height:376px;background:#dadada"></div>
<div style="position:absolute;left:798px;top:256px;width:1px;height:376px;background:#dadada"></div>
<div style="position:absolute;left:921px;top:256px;width:1px;height:376px;background:#dadada"></div>
<div style="position:absolute;left:1044px;top:256px;width:1px;height:376px;background:#dadada"></div>
<div style="position:absolute;left:1168px;top:256px;width:1px;height:376px;background:#dadada"></div>
<div style="position:absolute;left:59px;top:256px;width:246px;height:41px;background:#ddebf7"></div>
<div style="position:absolute;left:59px;top:511px;width:122px;height:41px;background:#ddebf7"></div>
<div style="position:absolute;left:58px;top:297px;width:247px;height:1px;background:#3c3c3c"></div>
<div style="position:absolute;left:58px;top:340px;width:247px;height:1px;background:#3c3c3c"></div>
<div style="position:absolute;left:58px;top:382px;width:247px;height:1px;background:#3c3c3c"></div>
<div style="position:absolute;left:58px;top:425px;width:247px;height:1px;background:#3c3c3c"></div>
<div style="position:absolute;left:58px;top:467px;width:247px;height:1px;background:#3c3c3c"></div>
<div style="position:absolute;left:58px;top:510px;width:247px;height:1px;background:#3c3c3c"></div>
<div style="position:absolute;left:58px;top:552px;width:247px;height:1px;background:#3c3c3c"></div>
<div style="position:absolute;left:181px;top:255px;width:1px;height:297px;background:#3c3c3c"></div>
<div style="position:absolute;left:304px;top:255px;width:1px;height:297px;background:#3c3c3c"></div>
<div class="t" style="left:24.01px;top:304.50px;font-size:24.726px;color:#111;-webkit-text-stroke:0.35px #e6e6e6;transform:scaleX(1.1909);transform-origin:0 0">2</div>
<div class="t" style="left:23.41px;top:262.00px;font-size:24.726px;color:#111;-webkit-text-stroke:0.35px #e6e6e6;transform:scaleX(1.1909);transform-origin:0 0">1</div>
<div class="t" style="left:23.41px;top:347.00px;font-size:24.726px;color:#111;-webkit-text-stroke:0.35px #e6e6e6;transform:scaleX(1.1909);transform-origin:0 0">3</div>
<div class="t" style="left:23.41px;top:389.50px;font-size:24.726px;color:#111;-webkit-text-stroke:0.35px #e6e6e6;transform:scaleX(1.1909);transform-origin:0 0">4</div>
<div class="t" style="left:23.41px;top:432.00px;font-size:24.726px;color:#111;-webkit-text-stroke:0.35px #e6e6e6;transform:scaleX(1.1909);transform-origin:0 0">5</div>
<div class="t" style="left:23.41px;top:474.50px;font-size:24.726px;color:#111;-webkit-text-stroke:0.35px #e6e6e6;transform:scaleX(1.1909);transform-origin:0 0">6</div>
<div class="t" style="left:23.41px;top:517.00px;font-size:24.726px;color:#217346;-webkit-text-stroke:0.35px #d2d2d2;transform:scaleX(1.1909);transform-origin:0 0">7</div>
<div class="t" style="left:23.41px;top:559.00px;font-size:24.726px;color:#111;-webkit-text-stroke:0.35px #e6e6e6;transform:scaleX(1.1909);transform-origin:0 0">8</div>
<div class="t" style="left:23.41px;top:601.50px;font-size:24.726px;color:#111;-webkit-text-stroke:0.35px #e6e6e6;transform:scaleX(1.1909);transform-origin:0 0">9</div>
<div style="position:absolute;left:57px;top:510px;width:2px;height:43px;background:#217346"></div>
<div style="position:absolute;left:181px;top:509px;width:125px;height:44px;border:2px solid #217346;box-sizing:border-box"></div>
<div style="position:absolute;left:303px;top:550px;width:5px;height:5px;background:#217346;border:1px solid #fff;box-sizing:content-box;margin:-1px"></div>
<div class="t" style="left:83.40px;top:264.00px;font-size:21.913px;color:#1e1e1e;;transform:scaleX(1.1154);transform-origin:0 0">担当者</div>
<div class="t" style="left:96.62px;top:307.00px;font-size:21.913px;color:#1e1e1e;;transform:scaleX(1.1154);transform-origin:0 0">田中</div>
<div class="t" style="left:96.17px;top:349.00px;font-size:21.913px;color:#1e1e1e;;transform:scaleX(1.1154);transform-origin:0 0">佐藤</div>
<div class="t" style="left:96.62px;top:391.50px;font-size:21.913px;color:#1e1e1e;;transform:scaleX(1.1154);transform-origin:0 0">鈴木</div>
<div class="t" style="left:96.62px;top:434.50px;font-size:21.913px;color:#1e1e1e;;transform:scaleX(1.1154);transform-origin:0 0">田中</div>
<div class="t" style="left:96.17px;top:476.50px;font-size:21.913px;color:#1e1e1e;;transform:scaleX(1.1154);transform-origin:0 0">佐藤</div>
<div class="t" style="left:96.01px;top:519.00px;font-size:21.913px;color:#1e1e1e;;transform:scaleX(1.1154);transform-origin:0 0">合計</div>
<div class="t" style="left:218.76px;top:264.00px;font-size:21.913px;color:#1e1e1e;;transform:scaleX(1.1154);transform-origin:0 0">売上</div>
<div class="t" style="left:221.63px;top:304.10px;font-size:25.039px;color:#000;-webkit-text-stroke:0.45px #fff;transform:scaleX(1.0329);transform-origin:0 0">30,000</div>
<div class="t" style="left:221.63px;top:346.60px;font-size:25.039px;color:#000;-webkit-text-stroke:0.45px #fff;transform:scaleX(1.0329);transform-origin:0 0">25,000</div>
<div class="t" style="left:222.15px;top:389.10px;font-size:25.039px;color:#000;-webkit-text-stroke:0.45px #fff;transform:scaleX(1.0329);transform-origin:0 0">40,000</div>
<div class="t" style="left:221.63px;top:431.60px;font-size:25.039px;color:#000;-webkit-text-stroke:0.45px #fff;transform:scaleX(1.0329);transform-origin:0 0">20,000</div>
<div class="t" style="left:221.63px;top:474.10px;font-size:25.039px;color:#000;-webkit-text-stroke:0.45px #fff;transform:scaleX(1.0329);transform-origin:0 0">35,000</div>
<div class="t" style="left:207.70px;top:516.60px;font-size:25.039px;color:#000;-webkit-text-stroke:0.45px #fff;transform:scaleX(1.0329);transform-origin:0 0">150,000</div>
<div style="position:absolute;left:1229px;top:213px;width:20px;height:419px;background:#ededed"></div>
<div style="position:absolute;left:1228px;top:255px;width:1px;height:377px;background:#bdbdbd"></div>
<div style="position:absolute;left:1232px;top:215px;width:15px;height:15px;background:#fff;border:1px solid #c8c8c8;box-sizing:border-box"></div>
<svg style="position:absolute;left:1234px;top:219px;" width="11" height="7" viewBox="0 0 11 7"><path d="M1 6 L5.5 1 L10 6 Z" fill="#222"/></svg>
<div style="position:absolute;left:1232px;top:229px;width:15px;height:155px;background:#fff;border:1px solid #b4b4b4;box-sizing:border-box"></div>
<div style="position:absolute;left:1232px;top:617px;width:15px;height:15px;background:#fff;border:1px solid #c8c8c8;box-sizing:border-box"></div>
<svg style="position:absolute;left:1234px;top:622px;" width="11" height="7" viewBox="0 0 11 7"><path d="M1 1 L5.5 6 L10 1 Z" fill="#222"/></svg>
<div style="position:absolute;left:6px;top:632px;width:1243px;height:26px;background:#e6e6e6"></div>
<div style="position:absolute;left:6px;top:632px;width:1223px;height:1px;background:#a8a8a8"></div>
<div style="position:absolute;left:6px;top:657px;width:1243px;height:1px;background:#d0d0d0"></div>
<svg style="position:absolute;left:30px;top:641px;" width="6" height="9" viewBox="0 0 6 9"><path d="M5 0.5 L0.8 4.5 L5 8.5 Z" fill="#bbb"/></svg>
<svg style="position:absolute;left:56px;top:641px;" width="6" height="9" viewBox="0 0 6 9"><path d="M1 0.5 L5.2 4.5 L1 8.5 Z" fill="#bbb"/></svg>
<div style="position:absolute;left:96px;top:632px;width:71px;height:23px;background:#fff;border-left:1px solid #bbb;border-right:1px solid #bbb;box-sizing:border-box"></div>
<div style="position:absolute;left:96px;top:653px;width:71px;height:2px;background:#217346"></div>
<div class="t" style="left:106.97px;top:636.25px;font-size:14.570px;color:#217346;-webkit-text-stroke:0.25px #fff;transform:scaleX(1.0295);transform-origin:0 0">Sheet1</div>
<svg style="position:absolute;left:196px;top:636px;" width="19" height="19" viewBox="0 0 19 19"><circle cx="9.5" cy="9.5" r="8" fill="none" stroke="#777" stroke-width="1.1"/><path d="M9.5 5 V14 M5 9.5 H14" stroke="#666" stroke-width="1.2"/></svg>
<svg style="position:absolute;left:751px;top:639px;" width="4" height="13" viewBox="0 0 4 13"><circle cx="1.5" cy="2" r="0.9" fill="#aaa"/><circle cx="1.5" cy="6" r="0.9" fill="#aaa"/><circle cx="1.5" cy="10" r="0.9" fill="#aaa"/></svg>
<div style="position:absolute;left:767px;top:637px;width:48px;height:16px;background:#f0f0f0"></div>
<div style="position:absolute;left:767px;top:637px;width:17px;height:16px;background:#fff;border:1px solid #b4b4b4;box-sizing:border-box"></div>
<div style="position:absolute;left:783px;top:637px;width:383px;height:16px;background:#fff;border:1px solid #a8a8a8;box-sizing:border-box"></div>
<svg style="position:absolute;left:771px;top:641px;" width="6" height="8" viewBox="0 0 6 8"><path d="M5 0.5 L1 4 L5 7.5 Z" fill="#111"/></svg>
<div style="position:absolute;left:1166px;top:638px;width:48px;height:14px;background:#f0f0f0"></div>
<div style="position:absolute;left:1214px;top:637px;width:15px;height:16px;background:#fff;border:1px solid #c0c0c0;box-sizing:border-box"></div>
<svg style="position:absolute;left:1219px;top:641px;" width="6" height="8" viewBox="0 0 6 8"><path d="M1 0.5 L5 4 L1 7.5 Z" fill="#111"/></svg>
<div style="position:absolute;left:6px;top:658px;width:1243px;height:22px;background:#f3f3f3"></div>
<div class="t u" style="left:19.10px;top:662.45px;font-size:12.330px;color:#333;;transform:scaleX(1.0217);transform-origin:0 0">準備完了</div>
<svg style="position:absolute;left:88px;top:662px;" width="12" height="13" viewBox="0 0 12 13"><rect x="0.5" y="1" width="11" height="11" fill="none" stroke="#666"/><rect x="0.5" y="0.5" width="11" height="3.5" fill="#555"/><circle cx="2.5" cy="2" r="1.8" fill="#555"/><path d="M2.5 6 H4 M5.5 6 H7 M8.5 6 H10 M2.5 8 H4 M5.5 8 H7 M8.5 8 H10 M2.5 10 H4 M5.5 10 H7 M8.5 10 H10" stroke="#777"/></svg>
<svg style="position:absolute;left:118px;top:661px;" width="16" height="14" viewBox="0 0 16 14"><path d="M6 2 A5.5 5.5 0 1 0 4 12" fill="none" stroke="#555" stroke-width="1.1"/><circle cx="6.5" cy="2" r="1.1" fill="#555"/><path d="M4 6 L7 7 L10 6" fill="none" stroke="#555" stroke-width="1.1"/><path d="M8 9 L10.5 12 L15 5" fill="none" stroke="#333" stroke-width="1.4"/></svg>
<div class="t u" style="left:135.17px;top:662.83px;font-size:11.456px;color:#333;white-space:pre;transform:scaleX(0.8649);transform-origin:0 0">アクセシビリティ: 問題ありません</div>
<svg style="position:absolute;left:846px;top:661px;" width="18" height="16" viewBox="0 0 18 16"><rect x="0.5" y="0.5" width="15" height="10" fill="#555"/><path d="M2 12.5 H7" stroke="#555" stroke-width="1.5"/><circle cx="13" cy="12" r="3.2" fill="#555" stroke="#f3f3f3" stroke-width="1"/><circle cx="13" cy="12" r="1.2" fill="#f3f3f3"/></svg>
<div class="t u" style="left:862.37px;top:662.95px;font-size:11.397px;color:#333;;transform:scaleX(1.1262);transform-origin:0 0">表示設定</div>
<div style="position:absolute;left:932px;top:658px;width:39px;height:21px;background:#c6c6c6"></div>
<svg style="position:absolute;left:945px;top:662px;" width="14" height="14" viewBox="0 0 14 14"><rect x="0.5" y="0.5" width="12" height="12" fill="none" stroke="#666"/><path d="M4.5 0.5 V12.5 M8.5 0.5 V12.5 M0.5 4.5 H12.5 M0.5 8.5 H12.5" stroke="#666"/></svg>
<svg style="position:absolute;left:984px;top:662px;" width="14" height="14" viewBox="0 0 14 14"><rect x="0.5" y="0.5" width="12" height="12" fill="none" stroke="#777"/><rect x="3" y="3" width="7" height="7" fill="none" stroke="#777"/><path d="M4.5 5 H8.5 M4.5 7 H8.5" stroke="#777"/></svg>
<svg style="position:absolute;left:1024px;top:662px;" width="15" height="14" viewBox="0 0 15 14"><rect x="0.5" y="0.5" width="13" height="12" fill="none" stroke="#777"/><path d="M5.5 0.5 V6.5 H8.5 V0.5 M0.5 8.5 H13.5" fill="none" stroke="#777"/></svg>
<div style="position:absolute;left:1057px;top:668px;width:7px;height:1px;background:#555"></div>
<div style="position:absolute;left:1070px;top:668px;width:100px;height:1.4px;background:#666"></div>
<div style="position:absolute;left:1119px;top:666px;width:1px;height:6px;background:#666"></div>
<div style="position:absolute;left:1130px;top:663px;width:5px;height:11px;background:#444"></div>
<svg style="position:absolute;left:1174px;top:664px;" width="9" height="9" viewBox="0 0 9 9"><path d="M4.5 0.5 V8.5 M0.5 4.5 H8.5" stroke="#555" stroke-width="1.1"/></svg>
<div class="t" style="left:1195.13px;top:662.05px;font-size:11.743px;color:#333;-webkit-text-stroke:0.25px #f3f3f3;transform:scaleX(1.1679);transform-origin:0 0">175%</div>
<div style="position:absolute;left:6px;top:6px;width:1244px;height:674px;box-sizing:border-box;border:1px solid #60806f;border-top-color:transparent;border-radius:8px"></div>
<div style="position:absolute;left:7px;top:71px;width:1242px;height:608px;box-sizing:border-box;border:1px solid #dcf3e6;border-top:none;border-radius:0 0 7px 7px"></div>
</div></body></html>
